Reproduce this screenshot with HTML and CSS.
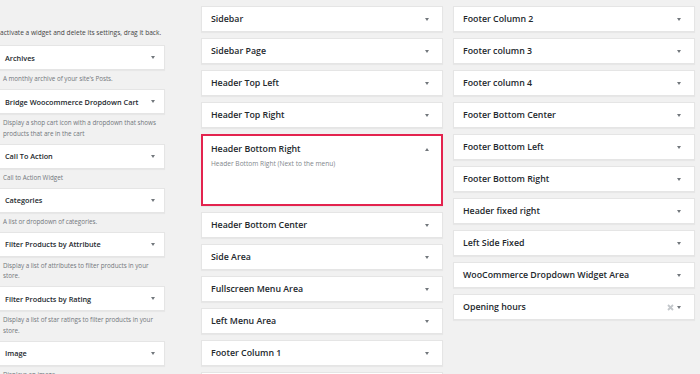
FILE: index.html
```html
<!DOCTYPE html>
<html lang="en">
<head>
    <meta charset="UTF-8">
    <meta name="viewport" content="width=device-width, initial-scale=1.0">
    <title>Widgets</title>
    <link rel="stylesheet" href="styles.css">
</head>
<body>
    <div class="widgets">
        <!-- Available widgets -->
        <div class="available">
            <p class="hint">To deactivate a widget and delete its settings, drag it back.</p>

            <div class="widget"><span class="title">Archives</span><span class="arrow"></span></div>
            <p class="desc">A monthly archive of your site's Posts.</p>

            <div class="widget"><span class="title">Bridge Woocommerce Dropdown Cart</span><span class="arrow"></span></div>
            <p class="desc">Display a shop cart icon with a dropdown that shows products that are in the cart</p>

            <div class="widget"><span class="title">Call To Action</span><span class="arrow"></span></div>
            <p class="desc">Call to Action Widget</p>

            <div class="widget"><span class="title">Categories</span><span class="arrow"></span></div>
            <p class="desc">A list or dropdown of categories.</p>

            <div class="widget"><span class="title">Filter Products by Attribute</span><span class="arrow"></span></div>
            <p class="desc">Display a list of attributes to filter products in your store.</p>

            <div class="widget"><span class="title">Filter Products by Rating</span><span class="arrow"></span></div>
            <p class="desc">Display a list of star ratings to filter products in your store.</p>

            <div class="widget"><span class="title">Image</span><span class="arrow"></span></div>
            <p class="desc">Displays an image.</p>
        </div>

        <!-- Widget areas -->
        <div class="areas">
            <div class="area"><span class="title">Sidebar</span><span class="arrow"></span></div>
            <div class="area"><span class="title">Sidebar Page</span><span class="arrow"></span></div>
            <div class="area"><span class="title">Header Top Left</span><span class="arrow"></span></div>
            <div class="area"><span class="title">Header Top Right</span><span class="arrow"></span></div>
            <div class="area open">
                <div class="area-head"><span class="title">Header Bottom Right</span><span class="arrow up"></span></div>
                <p class="area-desc">Header Bottom Right (Next to the menu)</p>
            </div>
            <div class="area"><span class="title">Header Bottom Center</span><span class="arrow"></span></div>
            <div class="area"><span class="title">Side Area</span><span class="arrow"></span></div>
            <div class="area"><span class="title">Fullscreen Menu Area</span><span class="arrow"></span></div>
            <div class="area"><span class="title">Left Menu Area</span><span class="arrow"></span></div>
            <div class="area"><span class="title">Footer Column 1</span><span class="arrow"></span></div>
            <div class="area"><span class="title">Header Bottom Left</span><span class="arrow"></span></div>
        </div>

        <div class="areas">
            <div class="area"><span class="title">Footer Column 2</span><span class="arrow"></span></div>
            <div class="area"><span class="title">Footer column 3</span><span class="arrow"></span></div>
            <div class="area"><span class="title">Footer column 4</span><span class="arrow"></span></div>
            <div class="area"><span class="title">Footer Bottom Center</span><span class="arrow"></span></div>
            <div class="area"><span class="title">Footer Bottom Left</span><span class="arrow"></span></div>
            <div class="area"><span class="title">Footer Bottom Right</span><span class="arrow"></span></div>
            <div class="area"><span class="title">Header fixed right</span><span class="arrow"></span></div>
            <div class="area"><span class="title">Left Side Fixed</span><span class="arrow"></span></div>
            <div class="area"><span class="title">WooCommerce Dropdown Widget Area</span><span class="arrow"></span></div>
            <div class="area">
                <span class="title">Opening hours</span>
                <span class="tools">
                    <svg class="remove" width="7" height="7" viewBox="0 0 7 7"><path d="M1 1 L6 6 M6 1 L1 6" stroke="#c3c7cb" stroke-width="1.8"/></svg>
                    <span class="arrow"></span>
                </span>
            </div>
        </div>
    </div>
</body>
</html>
```

FILE: styles.css
```css
/* Tela de widgets */
* {
    margin: 0;
    padding: 0;
    box-sizing: border-box;
}

body {
    background-color: #f1f1f1;
    font-family: "Open Sans", "Noto Sans", sans-serif;
    color: #23282d;
    overflow: hidden;
}

.widgets {
    display: flex;
    align-items: flex-start;
    margin-left: -3px;
}

/* coluna da esquerda */
.available {
    flex-shrink: 0;
    width: 168px;
    margin-right: 36px;
    padding-top: 28px;
}

.hint {
    font-size: 6.6px;
    line-height: 10.5px;
    margin-left: -14px;
    margin-bottom: 6.5px;
    color: #444;
    white-space: nowrap;
}

.widget {
    display: flex;
    align-items: center;
    justify-content: space-between;
    height: 25px;
    padding: 0 9px 0 7px;
    background-color: #fff;
    border: 1px solid #e5e5e5;
    box-shadow: 0 1px 1px rgba(0, 0, 0, 0.04);
}

.widget .title {
    font-size: 7.3px;
    font-weight: 600;
}

.desc {
    font-size: 6.3px;
    line-height: 10.5px;
    letter-spacing: -0.03px;
    padding: 4px 6px 4.5px 6px;
    color: #72777c;
}

/* areas de widgets */
.areas {
    flex-shrink: 0;
    width: 242px;
    margin-right: 10px;
    padding-top: 6px;
}

.area {
    display: flex;
    align-items: center;
    justify-content: space-between;
    height: 26px;
    margin-bottom: 6px;
    padding: 0 13px 0 9px;
    background-color: #fff;
    border: 1px solid #e5e5e5;
    box-shadow: 0 1px 1px rgba(0, 0, 0, 0.04);
}

.area .title {
    font-size: 8.8px;
    font-weight: 600;
}

.area.open {
    display: block;
    height: 72px;
    padding: 0;
    border: 2px solid #e3234e;
}

.area-head {
    display: flex;
    align-items: center;
    justify-content: space-between;
    height: 26px;
    padding: 0 12px 0 8px;
}

.area-desc {
    font-size: 6.6px;
    color: #82878c;
    padding: 0 8px;
    margin-top: -3px;
}

.arrow {
    width: 0;
    height: 0;
    border-left: 2.5px solid transparent;
    border-right: 2.5px solid transparent;
    border-top: 3px solid #72777c;
}

.arrow.up {
    border-top: none;
    border-bottom: 3px solid #72777c;
}

.tools {
    display: flex;
    align-items: center;
    gap: 3px;
}
```
